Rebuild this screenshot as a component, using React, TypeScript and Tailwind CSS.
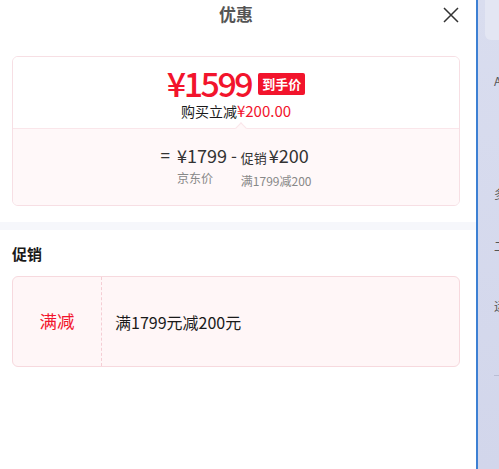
import React from 'react';

const font = { fontFamily: '"Noto Sans CJK SC", "Noto Sans", sans-serif' };

const CloseIcon = () => (
  <svg width="16" height="16" viewBox="0 0 16 16" fill="none" stroke="#333" strokeWidth="1.5">
    <path d="M1 1L15 15M15 1L1 15" />
  </svg>
);

const PriceCard = () => (
  <div className="border border-[#f7dfe4] rounded-md overflow-hidden">
    <div className="h-[71px] bg-white flex flex-col items-center">
      <div className="flex items-center mt-[8px] h-[36px]">
        <span className="text-[34px] leading-[34px] font-medium tracking-[-2.5px] text-[#f2142c]">¥1599</span>
        <span className="ml-[7px] mt-[2px] bg-[#f2142c] text-white text-[13px] font-bold leading-[22px] px-[4px] rounded-[2px]">到手价</span>
      </div>
      <div className="mt-[1px] text-[14px] leading-[18px] text-[#1a1a1a]">
        购买立减<span className="text-[#f2142c] text-[15px]">¥200.00</span>
      </div>
    </div>
    <div className="relative h-[77px] bg-[#fff8f9] border-t border-[#fae6ea] flex justify-center">
      <div className="absolute -top-[5px] left-[224px] w-[8px] h-[8px] rotate-45 bg-[#fff8f9] border-l border-t border-[#fae6ea]" />
      <div className="flex mt-[15px] text-[#333]">
        <div className="text-[17px] leading-[22px] mr-[7px]">=</div>
        <div className="flex flex-col">
          <div className="text-[18px] leading-[22px]">¥1799</div>
          <div className="text-[12px] leading-[16px] mt-[4px] text-[#888]">京东价</div>
        </div>
        <div className="text-[17px] leading-[22px] mx-[4px]">-</div>
        <div className="flex flex-col">
          <div className="flex items-baseline">
            <span className="text-[13px] leading-[22px] mr-[2px]">促销</span>
            <span className="text-[18px] leading-[22px]">¥200</span>
          </div>
          <div className="text-[12px] leading-[16px] mt-[4px] text-[#888]">满1799减200</div>
        </div>
      </div>
    </div>
  </div>
);

const PromoCard = () => (
  <div className="flex h-[91px] border border-[#f7d9de] bg-[#fff6f7] rounded-md">
    <div className="w-[89px] flex items-center justify-center border-r border-dashed border-[#f5cdd4] text-[#f2142c] text-[17.5px]">
      满减
    </div>
    <div className="flex items-center pl-[13px] text-[16px] text-[#1a1a1a]">满1799元减200元</div>
  </div>
);

const SideStrip = () => (
  <div className="flex-1 border-l-2 border-[#3d80d3] bg-gradient-to-b from-[#d9ddef] to-[#d2d6eb] overflow-hidden text-[12px] text-[#555] whitespace-nowrap">
    <div className="ml-[7px] h-[40px] bg-[#e3e6f3] rounded-bl-md" />
    <div className="ml-[16px] mt-[33px] leading-[16px]">A</div>
    <div className="ml-[16px] mt-[97px] leading-[16px]">多</div>
    <div className="ml-[16px] mt-[36px] leading-[16px]">二</div>
    <div className="ml-[16px] mt-[44px] leading-[16px]">运</div>
    <div className="ml-[16px] mt-[61px] h-px bg-[#b9bdd4]" />
  </div>
);

export default function App() {
  return (
    <div className="flex w-[499px] h-[469px] overflow-hidden bg-white" style={font}>
      <div className="w-[476px] shrink-0 bg-white">
        <div className="relative h-[28px] w-[472px] flex items-center justify-center">
          <span className="text-[17px] font-bold text-[#555]">优惠</span>
          <div className="absolute right-[13px] top-[7px]">
            <CloseIcon />
          </div>
        </div>
        <div className="pl-3 pr-4 pt-[28px]">
          <PriceCard />
        </div>
        <div className="mt-[16px] h-[8px] bg-[#f6f7fb]" />
        <div className="pl-3 pr-4">
          <div className="mt-[14px] text-[15px] leading-[20px] font-bold text-[#1a1a1a]">促销</div>
          <div className="mt-[12px]">
            <PromoCard />
          </div>
        </div>
      </div>
      <SideStrip />
    </div>
  );
}
